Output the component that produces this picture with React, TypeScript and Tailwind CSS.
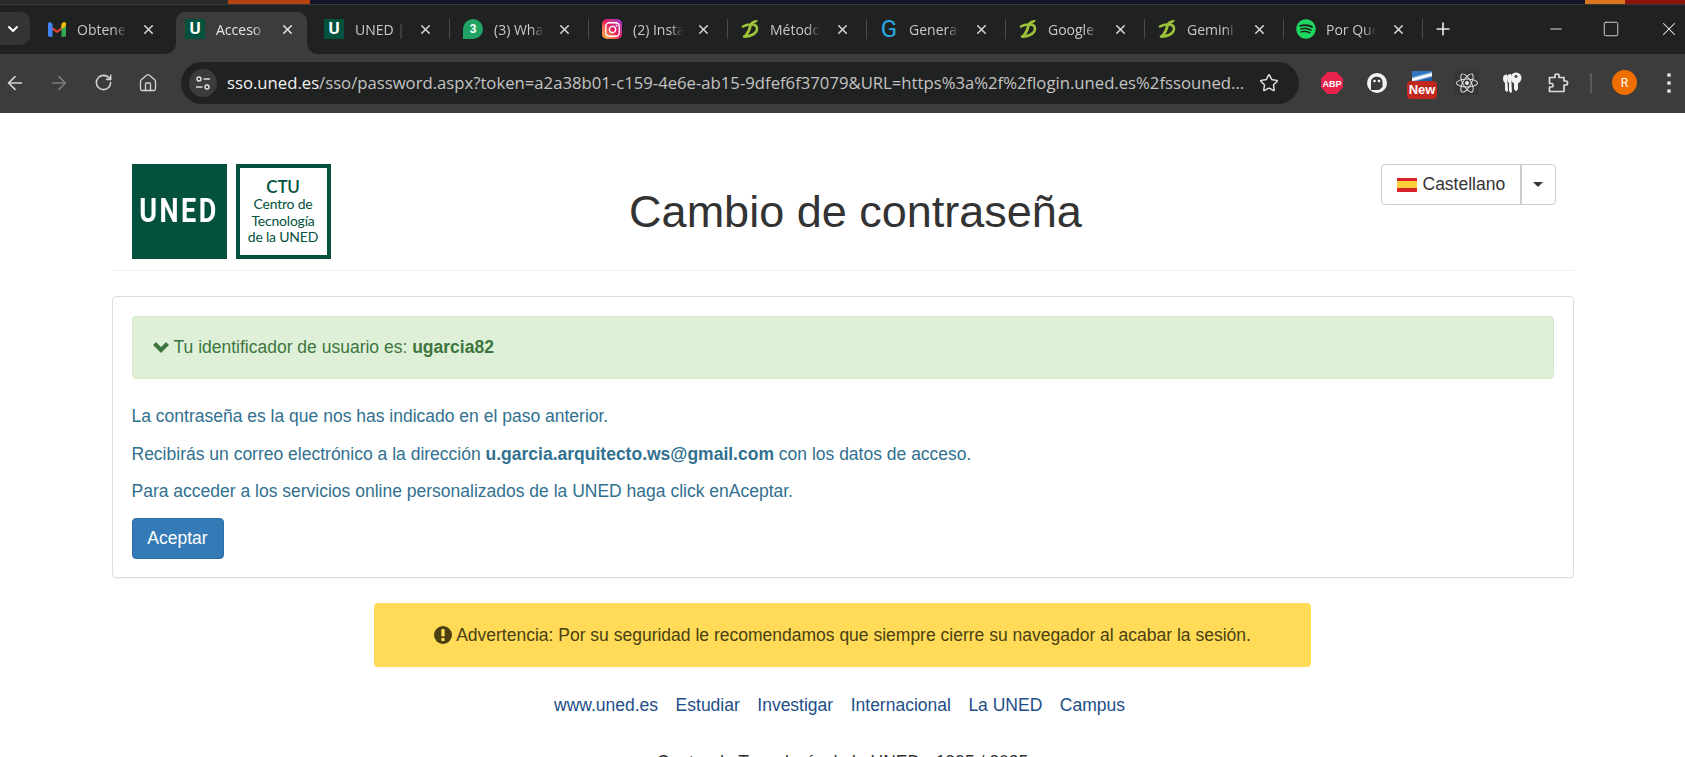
import { ArrowLeft, ArrowRight, ChevronDown, House, Minus, Plus, RotateCw, Square, Star, X } from 'lucide-react'
import { FaInstagram, FaReact, FaSpotify } from 'react-icons/fa'
import type { ReactNode } from 'react'

const UnedIcon = () => (
	<div className="flex h-5 w-5 items-center justify-center bg-[#04513e] font-['Roboto',sans-serif] text-[17px] font-bold text-white">U</div>
)

const GmailIcon = () => (
	<svg viewBox="0 0 20 16" className="ml-[2px] h-[15px] w-[18px]">
		<path d="M0 2 L10 9 L20 2 L20 5 L10 12 L0 5Z" fill="#ea4335" />
		<path d="M0 2 C0 0 2 -0.5 3.5 0.5 L5 2 L5 16 L1 16 C0.4 16 0 15.5 0 15Z" fill="#4285f4" />
		<path d="M20 2 C20 0 18 -0.5 16.5 0.5 L15 2 L15 16 L19 16 C19.6 16 20 15.5 20 15Z" fill="#34a853" />
		<path d="M15 2 L16.5 0.5 C18 -0.5 20 0 20 2 L20 4 L15 7.5Z" fill="#fbbc04" />
	</svg>
)

const WhatsIcon = () => (
	<div className="relative flex h-5 w-5 items-center justify-center rounded-full rounded-bl-[3px] bg-[#1fa463] font-['Liberation_Sans',sans-serif] text-[12px] font-bold text-white">3</div>
)

const InstaIcon = () => (
	<div className="flex h-5 w-5 items-center justify-center rounded-[5px] bg-linear-to-tr from-[#fdb92c] via-[#e8185f] to-[#a02bd0] text-white">
		<FaInstagram size={17} />
	</div>
)

const LeafD = () => (
	<svg viewBox="0 0 20 20" className="h-5 w-5" fill="none">
		<path d="M3 7.5 C6 5.5 17 3.5 17 9.5 C17 15 9 18 4 17.5" stroke="#9cc33a" strokeWidth="2.6" strokeLinecap="round" />
		<path d="M10.5 6 C10 10 8 14 5 17.5" stroke="#9cc33a" strokeWidth="2.8" strokeLinecap="round" />
		<path d="M10 5 C11 2 14 1 18 1 C17 3.5 14 5.5 10 5Z" fill="#9cc33a" />
	</svg>
)

const GIcon = () => (
	<div className="flex h-5 w-5 items-center justify-center font-['Roboto',sans-serif] text-[24px] leading-none text-[#29a9e1]">G</div>
)

const SpotifyIcon = () => <FaSpotify size={20} className="text-[#1ed760]" />

type TabProps = { icon: ReactNode; title: string; active?: boolean; sep?: boolean; tight?: boolean }

const Tab = ({ icon, title, active, sep = true, tight }: TabProps) => {
	if (active) {
		return (
			<div className="relative mr-2 flex h-[42px] w-[131px] items-center rounded-t-[9px] bg-[#3c3c3c] pb-2 pl-[9px]">
				<span className="absolute bottom-0 left-[-10px] h-[10px] w-[10px] bg-[radial-gradient(circle_at_0_0,#202221_9.5px,#3c3c3c_10px)]" />
				<span className="absolute right-[-10px] bottom-0 h-[10px] w-[10px] bg-[radial-gradient(circle_at_100%_0,#202221_9.5px,#3c3c3c_10px)]" />
				{icon}
				<span className="ml-[11px] w-[50px] overflow-hidden whitespace-nowrap text-[#e6e6e6] [mask-image:linear-gradient(to_right,#000_75%,transparent)]">{title}</span>
				<X size={15} strokeWidth={2.4} className="ml-[13.5px] text-[#e8e8e8]" />
			</div>
		)
	}
	return (
		<div className={tight ? 'flex h-[42px] w-[139px] items-center pr-1 pb-2 pl-[8px]' : 'flex h-[42px] w-[139px] items-center pr-1 pb-2 pl-[9px]'}>
			<div className="flex h-5 w-5 items-center justify-center">{icon}</div>
			<span className={tight ? 'ml-[10px] w-[50px] overflow-hidden whitespace-nowrap text-[#c8c8c8] [mask-image:linear-gradient(to_right,#000_75%,transparent)]' : 'ml-[11px] w-[50px] overflow-hidden whitespace-nowrap text-[#c8c8c8] [mask-image:linear-gradient(to_right,#000_75%,transparent)]'}>{title}</span>
			<div className={tight ? 'ml-[13px] flex w-5 items-center justify-center' : 'ml-[11px] flex w-5 items-center justify-center'}>
				<X size={15} strokeWidth={2.4} className="text-[#d8d8d8]" />
			</div>
			{sep && <div className="ml-[13px] h-[20px] w-[1.5px] bg-[#4a4a4a]" />}
		</div>
	)
}

const TuneIcon = () => (
	<svg viewBox="0 0 16 16" className="h-4 w-4" fill="none" stroke="#e4e4e4" strokeWidth="1.4">
		<circle cx="4" cy="4" r="2" />
		<path d="M8.5 4 H15" />
		<path d="M1 12 H7.5" />
		<circle cx="12" cy="12" r="2" />
	</svg>
)

const AbpIcon = () => (
	<svg viewBox="0 0 22 22" className="h-[22px] w-[22px]">
		<path d="M6.5 0 H15.5 L22 6.5 V15.5 L15.5 22 H6.5 L0 15.5 V6.5Z" fill="#e8234b" />
		<text x="11" y="14.5" textAnchor="middle" fontSize="9" fontWeight="700" fill="#fff" fontFamily="Liberation Sans">ABP</text>
	</svg>
)

const GhostIcon = () => (
	<svg viewBox="0 0 22 22" className="h-[22px] w-[22px]">
		<circle cx="11" cy="11" r="10" fill="#f2f2f2" />
		<path d="M5 18 V10 C5 3 16.5 3 16.5 10 V15 L13 18Z" fill="#3a3a3a" />
		<circle cx="8.5" cy="9" r="1.3" fill="#fff" />
		<circle cx="13" cy="9" r="1.3" fill="#fff" />
	</svg>
)

const KeysIcon = () => (
	<svg viewBox="0 0 24 24" className="h-[24px] w-[24px]" fill="#f0f0f0">
		<path d="M3 7 C3 4 6 3 7 3.5 L8 20 L6.5 21 L5 19 L5 12 C3.5 11 3 9 3 7Z" />
		<path d="M7 6 C7 3.5 10 2.5 11 3 L12 21 L10.5 22 L9 20 L9 12 C7.5 11 7 8.5 7 6Z" />
		<circle cx="16" cy="7" r="5.5" />
		<path d="M14 10 H18 V18 L16 20.5 L14 18Z" />
		<circle cx="16" cy="5.5" r="1.4" fill="#3c3c3c" />
	</svg>
)

const PuzzleIcon = () => (
	<svg viewBox="0 0 22 22" className="h-[22px] w-[22px]" fill="none" stroke="#dcdcdc" strokeWidth="1.7" strokeLinejoin="round">
		<path d="M2.5 5.5 H8 V3.5 C8 1.5 12 1.5 12 3.5 V5.5 H17 V9 H19 C21 9 21 13 19 13 H17 V19.5 H2.5 V15 H5 C6.5 15 6.5 11.5 5 11.5 H2.5Z" />
	</svg>
)

const NewBadge = () => (
	<div className="flex h-[28px] w-[30px] flex-col items-center">
		<div className="h-[11px] w-[20px] bg-[linear-gradient(165deg,#2f78c4_35%,#fff_50%,#fff_58%,#1d5fa8_72%)]" />
		<div className="-mt-[1px] flex h-[18px] w-[30px] shrink-0 items-center justify-center rounded-[4px] bg-[#c0271f] font-['Liberation_Sans',sans-serif] text-[13px] font-bold text-white">New</div>
	</div>
)

const ChevronGlyph = () => (
	<svg viewBox="0 0 16 11" className="h-[11px] w-4" fill="#3c763d">
		<path d="M0 3 L3 0 L8 5 L13 0 L16 3 L8 11Z" />
	</svg>
)

const WarnGlyph = () => (
	<svg viewBox="0 0 18 18" className="h-[18px] w-[18px]">
		<circle cx="9" cy="9" r="9" fill="#4a4012" />
		<rect x="7.3" y="3" width="3.4" height="7.5" rx="1" fill="#ffdb58" />
		<rect x="7.3" y="12" width="3.4" height="3" rx="0.8" fill="#ffdb58" />
	</svg>
)

export default function App() {
	return (
		<div className="flex h-[757px] flex-col overflow-hidden bg-white font-['Liberation_Sans',Arial,sans-serif] text-[17.5px]">
			{/* wallpaper strip */}
			<div className="flex h-[4px] shrink-0 bg-[#15152a]">
				<div className="w-[228px] bg-[#2a2a2a]" />
				<div className="w-[82px] bg-[#b5410f]" />
				<div className="flex-1" />
				<div className="w-[40px] bg-[#d9761f]" />
				<div className="w-[60px] bg-[#8d1208]" />
			</div>
			<div className="flex h-[50px] shrink-0 items-end border-t border-[#3a3a3a] bg-[#202221] font-['Open_Sans',sans-serif] text-[14px]">
				<div className="mb-[9px] mr-[7px] flex h-[33px] w-[30px] items-center justify-center rounded-r-[9px] bg-[#333434] pr-1 text-white">
					<ChevronDown size={16} strokeWidth={3} />
				</div>
				<Tab icon={<GmailIcon />} title="Obtener" sep={false} />
				<Tab icon={<UnedIcon />} title="Acceso a" active />
				<Tab icon={<UnedIcon />} title="UNED | Inicio" />
				<Tab icon={<WhatsIcon />} title="(3) WhatsApp" />
				<Tab icon={<InstaIcon />} title="(2) Instagram" />
				<Tab icon={<LeafD />} title="Métodos" tight />
				<Tab icon={<GIcon />} title="Generador" tight />
				<Tab icon={<LeafD />} title="Google AI" tight />
				<Tab icon={<LeafD />} title="Gemini AI" tight />
				<Tab icon={<SpotifyIcon />} title="Por Qué" tight />
				<div className="mb-[16px] ml-[6px] flex h-[18px] w-5 items-center justify-center text-[#e8e8e8]">
					<Plus size={20} strokeWidth={2} />
				</div>
				<div className="mb-[15px] ml-auto flex h-5 items-center text-[#f0f0f0]">
					<Minus size={18} strokeWidth={1.2} />
					<Square size={18} strokeWidth={1.1} className="ml-[37px]" />
					<X size={22} strokeWidth={1.1} className="mr-[5px] ml-[38px]" />
				</div>
			</div>
			<div className="flex h-[59px] shrink-0 items-center bg-[#3c3c3c] pb-[2px] text-[#d4d4d4]">
				<ArrowLeft size={22} strokeWidth={1.8} className="ml-1" />
				<ArrowRight size={22} strokeWidth={1.8} className="ml-[22px] text-[#7b7b7b]" />
				<RotateCw size={19} strokeWidth={2} className="ml-[24px]" />
				<House size={20} strokeWidth={1.6} className="ml-[25px]" />
				<div className="ml-[23px] flex h-[42px] w-[1118px] items-center rounded-full bg-[#202221] pl-2">
					<div className="flex h-7 w-7 items-center justify-center rounded-full bg-[#3c3c3c]">
						<TuneIcon />
					</div>
					<span className="ml-[10px] w-[1016px] whitespace-nowrap font-['Open_Sans',sans-serif] text-[16.7px] text-[#c4c4c4]">
						<span className="text-[#f2f2f2]">sso.uned.es</span>/sso/password.aspx?token=a2a38b01-c159-4e6e-ab15-9dfef6f37079&URL=https%3a%2f%2flogin.uned.es%2fssouned...
					</span>
					<Star size={20} strokeWidth={1.7} className="ml-4 text-[#e0e0e0]" />
				</div>
				<div className="ml-[22px]"><AbpIcon /></div>
				<div className="ml-[23px]"><GhostIcon /></div>
				<div className="ml-[19px] mt-1"><NewBadge /></div>
				<div className="ml-[18px] flex h-6 w-6 items-center justify-center bg-[#363636]">
					<FaReact size={22} className="text-[#e8e8e8]" />
				</div>
				<div className="ml-[21px]"><KeysIcon /></div>
				<div className="ml-[23px]"><PuzzleIcon /></div>
				<div className="ml-[21px] h-[20px] w-[2px] bg-[#5a5a5a]" />
				<div className="ml-[20px] flex h-[25px] w-[25px] items-center justify-center rounded-full bg-[#ee6f00] font-['Roboto',sans-serif] text-[12px] text-white">R</div>
				<div className="ml-[30px] flex flex-col gap-[4px]">
					<span className="h-[4px] w-[4px] rounded-full bg-[#d8d8d8]" />
					<span className="h-[4px] w-[4px] rounded-full bg-[#d8d8d8]" />
					<span className="h-[4px] w-[4px] rounded-full bg-[#d8d8d8]" />
				</div>
			</div>

			<main className="mx-auto w-[1462px] pt-[51px] text-[#333]">
				<header className="flex items-start justify-between border-b border-[#eee] pr-[18px] pl-5 pb-[11px]">
					<div className="flex gap-[9px]">
						<div className="flex h-[95px] w-[95px] items-center justify-center bg-[#04513e] font-['Roboto',sans-serif] text-[27px] font-bold tracking-[2.5px] text-white">
							<span className="scale-y-[1.25]">UNED</span>
						</div>
						<div className="flex h-[95px] w-[95px] flex-col items-center justify-center border-[4px] border-[#04513e] font-['Lato',sans-serif] text-[14px] leading-[16.5px] tracking-[-0.2px] text-[#04513e]">
							<span className="text-[17px] leading-[19px] font-semibold">CTU</span>
							<span>Centro de</span>
							<span>Tecnología</span>
							<span>de la UNED</span>
						</div>
					</div>
					<h1 className="mt-[17px] text-[45px] leading-[62px] font-normal whitespace-nowrap">Cambio de contraseña</h1>
					<div className="flex h-[41px] rounded-[4px] border border-[#ccc]">
						<div className="flex w-[140px] items-center border-r-2 border-[#ccc] pl-[15px]">
							<div className="flex h-[14px] w-5 flex-col">
								<span className="h-[3.5px] bg-[#d8232a]" />
								<span className="h-[7px] bg-[#fbd03a]" />
								<span className="h-[3.5px] bg-[#d8232a]" />
							</div>
							<span className="ml-[6px]">Castellano</span>
						</div>
						<div className="flex w-[33px] items-center justify-center">
							<span className="h-0 w-0 border-x-[5.5px] border-t-[5px] border-x-transparent border-t-[#333]" />
						</div>
					</div>
				</header>

				<section className="mt-[25px] rounded-[4px] border border-[#ddd] px-[19px] pt-[19px] pb-[18px] text-[#31708f] shadow-[0_1px_1px_rgba(0,0,0,0.05)]">
					<div className="mb-[24px] flex h-[63px] items-center rounded-[4px] border border-[#d6e9c6] bg-[#dff0d8] pl-5 text-[#3c763d]">
						<ChevronGlyph />
						<span className="ml-[5px]">Tu identificador de usuario es: <strong>ugarcia82</strong></span>
					</div>
					<p className="mb-[10.5px] leading-[27px]">La contraseña es la que nos has indicado en el paso anterior.</p>
					<p className="mb-[10.5px] leading-[27px]">Recibirás un correo electrónico a la dirección <strong>u.garcia.arquitecto.ws@gmail.com</strong> con los datos de acceso.</p>
					<p className="mb-[13px] leading-[27px]">Para acceder a los servicios online personalizados de la UNED haga click enAceptar.</p>
					<button className="h-[41px] w-[92px] rounded-[4px] border border-[#2e6da4] bg-[#337ab7] text-white">Aceptar</button>
				</section>

				<div className="mx-auto mt-[25px] flex h-[64px] w-[937px] items-center justify-center gap-[4px] rounded-[4px] bg-[#ffdb58] text-[#4a4012]">
					<WarnGlyph />
					<span>Advertencia: Por su seguridad le recomendamos que siempre cierre su navegador al acabar la sesión.</span>
				</div>

				<nav className="mt-[27px] flex justify-center gap-[17.5px] pr-[6px] leading-[23px] text-[#1d4e89]">
					<a>www.uned.es</a>
					<a>Estudiar</a>
					<a>Investigar</a>
					<a>Internacional</a>
					<a>La UNED</a>
					<a>Campus</a>
				</nav>

				<p className="mt-[34px] text-center leading-[23px]">Centro de Tecnología de la UNED - 1995 / 2025</p>
			</main>
		</div>
	)
}
